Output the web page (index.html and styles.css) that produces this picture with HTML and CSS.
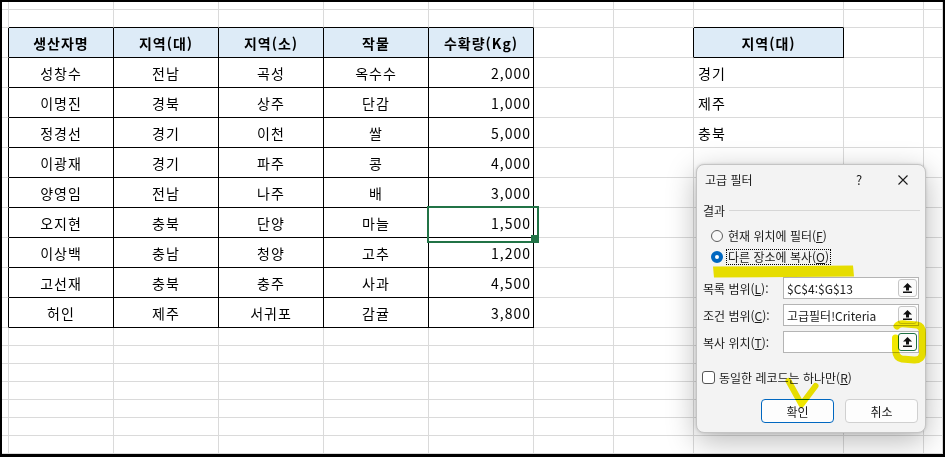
FILE: index.html
```html
<!DOCTYPE html>
<html lang="ko">
<head>
<meta charset="utf-8">
<title>고급 필터</title>
<link rel="stylesheet" href="styles.css">
</head>
<body>
<div class="frame">
  <div class="sheet">
    <!-- row 2 (partial) -->
    <div class="c"></div><div class="c"></div><div class="c"></div><div class="c"></div><div class="c"></div><div class="c"></div><div class="c"></div><div class="c"></div><div class="c"></div><div class="c"></div><div class="c"></div>
    <!-- row 3 -->
    <div class="c"></div><div class="c bB"></div><div class="c bB"></div><div class="c bB"></div><div class="c bB"></div><div class="c bB"></div><div class="c"></div><div class="c"></div><div class="c bB"></div><div class="c"></div><div class="c"></div>
    <!-- row 4 header -->
    <div class="c bR"></div><div class="c t h">생산자명</div><div class="c t h">지역(대)</div><div class="c t h">지역(소)</div><div class="c t h">작물</div><div class="c t h">수확량(Kg)</div><div class="c"></div><div class="c bR"></div><div class="c t h">지역(대)</div><div class="c"></div><div class="c"></div>
    <!-- row 5 -->
    <div class="c bR"></div><div class="c t">성창수</div><div class="c t">전남</div><div class="c t">곡성</div><div class="c t">옥수수</div><div class="c t n">2,000</div><div class="c"></div><div class="c"></div><div class="c l">경기</div><div class="c"></div><div class="c"></div>
    <!-- row 6 -->
    <div class="c bR"></div><div class="c t">이명진</div><div class="c t">경북</div><div class="c t">상주</div><div class="c t">단감</div><div class="c t n">1,000</div><div class="c"></div><div class="c"></div><div class="c l">제주</div><div class="c"></div><div class="c"></div>
    <!-- row 7 -->
    <div class="c bR"></div><div class="c t">정경선</div><div class="c t">경기</div><div class="c t">이천</div><div class="c t">쌀</div><div class="c t n">5,000</div><div class="c"></div><div class="c"></div><div class="c l">충북</div><div class="c"></div><div class="c"></div>
    <!-- row 8 -->
    <div class="c bR"></div><div class="c t">이광재</div><div class="c t">경기</div><div class="c t">파주</div><div class="c t">콩</div><div class="c t n">4,000</div><div class="c"></div><div class="c"></div><div class="c"></div><div class="c"></div><div class="c"></div>
    <!-- row 9 -->
    <div class="c bR"></div><div class="c t">양영임</div><div class="c t">전남</div><div class="c t">나주</div><div class="c t">배</div><div class="c t n">3,000</div><div class="c"></div><div class="c"></div><div class="c"></div><div class="c"></div><div class="c"></div>
    <!-- row 10 -->
    <div class="c bR"></div><div class="c t">오지현</div><div class="c t">충북</div><div class="c t">단양</div><div class="c t">마늘</div><div class="c t n sel">1,500</div><div class="c"></div><div class="c"></div><div class="c"></div><div class="c"></div><div class="c"></div>
    <!-- row 11 -->
    <div class="c bR"></div><div class="c t">이상백</div><div class="c t">충남</div><div class="c t">청양</div><div class="c t">고추</div><div class="c t n">1,200</div><div class="c"></div><div class="c"></div><div class="c"></div><div class="c"></div><div class="c"></div>
    <!-- row 12 -->
    <div class="c bR"></div><div class="c t">고선재</div><div class="c t">충북</div><div class="c t">충주</div><div class="c t">사과</div><div class="c t n">4,500</div><div class="c"></div><div class="c"></div><div class="c"></div><div class="c"></div><div class="c"></div>
    <!-- row 13 -->
    <div class="c bR"></div><div class="c t">허인</div><div class="c t">제주</div><div class="c t">서귀포</div><div class="c t">감귤</div><div class="c t n">3,800</div><div class="c"></div><div class="c"></div><div class="c"></div><div class="c"></div><div class="c"></div>
    <!-- rows 14-20 -->
    <div class="c"></div><div class="c"></div><div class="c"></div><div class="c"></div><div class="c"></div><div class="c"></div><div class="c"></div><div class="c"></div><div class="c"></div><div class="c"></div><div class="c"></div>
    <div class="c"></div><div class="c"></div><div class="c"></div><div class="c"></div><div class="c"></div><div class="c"></div><div class="c"></div><div class="c"></div><div class="c"></div><div class="c"></div><div class="c"></div>
    <div class="c"></div><div class="c"></div><div class="c"></div><div class="c"></div><div class="c"></div><div class="c"></div><div class="c"></div><div class="c"></div><div class="c"></div><div class="c"></div><div class="c"></div>
    <div class="c"></div><div class="c"></div><div class="c"></div><div class="c"></div><div class="c"></div><div class="c"></div><div class="c"></div><div class="c"></div><div class="c"></div><div class="c"></div><div class="c"></div>
    <div class="c"></div><div class="c"></div><div class="c"></div><div class="c"></div><div class="c"></div><div class="c"></div><div class="c"></div><div class="c"></div><div class="c"></div><div class="c"></div><div class="c"></div>
    <div class="c"></div><div class="c"></div><div class="c"></div><div class="c"></div><div class="c"></div><div class="c"></div><div class="c"></div><div class="c"></div><div class="c"></div><div class="c"></div><div class="c"></div>
    <div class="c"></div><div class="c"></div><div class="c"></div><div class="c"></div><div class="c"></div><div class="c"></div><div class="c"></div><div class="c"></div><div class="c"></div><div class="c"></div><div class="c"></div>
  </div>

  <div class="dialog">
    <div class="dlg-title">
      <span class="dlg-name">고급 필터</span>
      <span class="dlg-help">?</span>
      <span class="dlg-close"><svg width="10" height="10" viewBox="0 0 10 10"><path d="M0.5 0.5 L9.5 9.5 M9.5 0.5 L0.5 9.5" stroke="#1a1a1a" stroke-width="1.1" fill="none"/></svg></span>
    </div>
    <div class="dlg-body">
      <div class="group"><span>결과</span><span class="sep"></span></div>
      <div class="radio"><span class="rb"></span><span class="rtext">현재 위치에 필터(<u>F</u>)</span></div>
      <div class="radio"><span class="rb on"></span><span class="rtext focus">다른 장소에 복사(<u>O</u>)</span></div>
      <div class="field first"><span class="lbl">목록 범위(<u>L</u>):</span><div class="inp"><span class="val">$C$4:$G$13</span><span class="pick"><svg width="9" height="10" viewBox="0 0 9 10"><path d="M4.5 0 L9 4.5 L6 4.5 L6 7.5 L3 7.5 L3 4.5 L0 4.5 Z" fill="#111"/><rect x="0" y="8.5" width="9" height="1.5" fill="#111"/></svg></span></div></div>
      <div class="field"><span class="lbl">조건 범위(<u>C</u>):</span><div class="inp"><span class="val">고급필터!Criteria</span><span class="pick"><svg width="9" height="10" viewBox="0 0 9 10"><path d="M4.5 0 L9 4.5 L6 4.5 L6 7.5 L3 7.5 L3 4.5 L0 4.5 Z" fill="#111"/><rect x="0" y="8.5" width="9" height="1.5" fill="#111"/></svg></span></div></div>
      <div class="field"><span class="lbl">복사 위치(<u>T</u>):</span><div class="inp"><span class="val"></span><span class="pick active"><svg width="9" height="10" viewBox="0 0 9 10"><path d="M4.5 0 L9 4.5 L6 4.5 L6 7.5 L3 7.5 L3 4.5 L0 4.5 Z" fill="#111"/><rect x="0" y="8.5" width="9" height="1.5" fill="#111"/></svg></span></div></div>
      <div class="check"><span class="cb"></span><span>동일한 레코드는 하나만(<u>R</u>)</span></div>
      <div class="btns"><button class="btn primary">확인</button><button class="btn">취소</button></div>
    </div>
  </div>

  <svg class="marks" width="945" height="457" viewBox="0 0 945 457">
    <path d="M713 266.5 L853 265.5 L854 276.5 L714 277.5 Z" fill="#f2e800"/>
    <path d="M897 326 Q899 323 906 324 L917 325 Q922.5 326 922.5 333 L922.5 352 Q922.5 360.5 914 360 L902 359 Q896 358 895.5 350 L895.5 338" fill="none" stroke="#f2e800" stroke-width="7" stroke-linecap="round" stroke-linejoin="round"/>
    <path d="M788.5 381 L801.5 404.5 L815.5 386" fill="none" stroke="#f2e800" stroke-width="6" stroke-linecap="round" stroke-linejoin="round"/>
  </svg>
</div>
</body>
</html>
```

FILE: styles.css
```css
* { box-sizing: border-box; }
html, body { margin: 0; padding: 0; }
body {
  width: 945px;
  height: 457px;
  overflow: hidden;
  background: #fff;
  font-family: "Noto Sans CJK KR", "Noto Sans", sans-serif;
}
.frame {
  position: relative;
  width: 945px;
  height: 457px;
  border: 2px solid #000;
  border-bottom-width: 3px;
  background: #fff;
  overflow: hidden;
}
.sheet {
  display: grid;
  grid-template-columns: 7px repeat(5, 105px) 80px 80px 150px 80px 19px;
  grid-template-rows: 8px 18px repeat(10, 30px) repeat(7, 18px);
}
.c {
  position: relative;
  min-width: 0;
  border-right: 1px solid #dadada;
  border-bottom: 1px solid #dadada;
  display: flex;
  align-items: center;
  justify-content: center;
  font-size: 14px;
  letter-spacing: 1px;
  color: #000;
  white-space: nowrap;
}
.bR { border-right-color: #000; }
.bB { border-bottom-color: #000; }
.t { border-right-color: #000; border-bottom-color: #000; }
.h { background: #ddebf7; font-weight: 700; }
.n { justify-content: flex-end; padding-right: 2px; }
.l { justify-content: flex-start; padding-left: 4px; }
.sel { z-index: 2; }
.sel::after {
  content: "";
  position: absolute;
  left: -2px;
  top: -2px;
  width: 108px;
  height: 33px;
  border: 2px solid #217346;
}
.sel::before {
  content: "";
  position: absolute;
  left: 102px;
  top: 27px;
  width: 6px;
  height: 6px;
  background: #217346;
}

/* dialog */
.dialog {
  position: absolute;
  left: 694px;
  top: 162px;
  width: 230px;
  background: #f3f3f3;
  border: 1px solid #c4c4c4;
  border-radius: 8px;
  box-shadow: 0 8px 30px rgba(0,0,0,0.28), 0 0 3px rgba(0,0,0,0.15);
  font-size: 12px;
  color: #1b1b1b;
  z-index: 5;
}
.dlg-title {
  display: flex;
  align-items: center;
  height: 29px;
  padding: 0 7px 0 8px;
  gap: 14px;
}
.dlg-name { margin-right: auto; }
.dlg-help, .dlg-close {
  width: 30px;
  display: flex;
  justify-content: center;
  align-items: center;
  font-size: 13px;
}
.dlg-body { padding: 0 6px 9px 6px; }
.group {
  margin-top: 8px;
  height: 16px;
  display: flex;
  align-items: center;
  gap: 4px;
}
.sep { flex: 1; height: 1px; background: #d6d6d6; margin-right: -1px; }
.radio {
  height: 21px;
  display: flex;
  align-items: center;
}
.group + .radio { margin-top: 7px; }
.rb {
  margin-left: 8px;
  width: 12px;
  height: 12px;
  border-radius: 50%;
  border: 1px solid #5c5c5c;
  background: #f9f9f9;
}
.rb.on { border: 4px solid #0067c0; background: #fff; }
.rtext {
  margin-left: 3px;
  padding: 0 1px;
  height: 16px;
  line-height: 14px;
  border: 1px dotted transparent;
}
.rtext.focus { border-color: #000; }
.field {
  display: flex;
  align-items: center;
  height: 22px;
  margin-top: 5px;
}
.field.first { margin-top: 10px; }
.lbl { width: 80px; }
.inp {
  width: 136px;
  height: 22px;
  background: #fff;
  border: 1px solid #b4b4b4;
  display: flex;
  align-items: center;
  padding: 0 1px 0 3px;
}
.val { flex: 1; white-space: nowrap; }
.pick {
  width: 19px;
  height: 18px;
  border: 1px solid #c6c6c6;
  border-radius: 3px;
  background: #fbfbfb;
  display: flex;
  align-items: center;
  justify-content: center;
}
.pick.active { border-color: #1e7145; }
.check {
  margin-top: 14px;
  height: 20px;
  display: flex;
  align-items: center;
}
.cb {
  margin-left: -1px;
  margin-right: 4px;
  width: 13px;
  height: 13px;
  border: 1px solid #555;
  border-radius: 3px;
  background: #fff;
}
.btns {
  margin-top: 12px;
  margin-right: 1px;
  display: flex;
  justify-content: flex-end;
  gap: 11px;
}
.btn {
  width: 73px;
  height: 24px;
  border: 1px solid #d0d0d0;
  border-radius: 4px;
  background: #fdfdfd;
  font-family: inherit;
  font-size: 12px;
  color: #1b1b1b;
  padding: 0;
}
.btn.primary { border-color: #0067c0; }
.marks {
  position: absolute;
  left: -2px;
  top: -2px;
  z-index: 10;
  mix-blend-mode: multiply;
  pointer-events: none;
}
```
